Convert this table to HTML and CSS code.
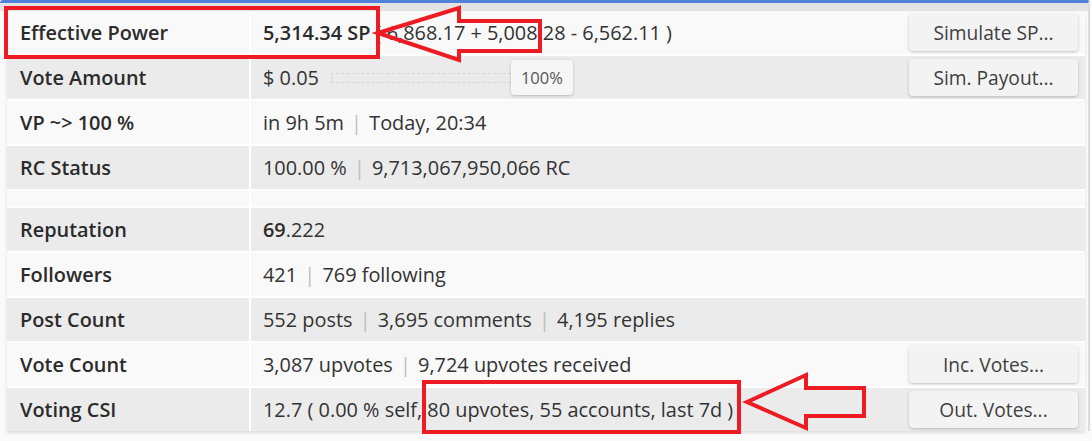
FILE: index.html
```html
<!DOCTYPE html>
<html>
<head>
<meta charset="utf-8">
<link rel="stylesheet" href="styles.css">
</head>
<body>
<div class="panel">
  <div class="list">
    <div class="row light">
      <div class="label">Effective Power</div>
      <div class="value"><span class="cell-text"><b>5,314.34 SP</b> ( 6,868.17 + 5,008.28 - 6,562.11 )</span><button class="btn">Simulate SP...</button></div>
    </div>
    <div class="row dark">
      <div class="label">Vote Amount</div>
      <div class="value"><span class="cell-text">$ 0.05</span><span class="slider"></span><span class="badge">100%</span><button class="btn">Sim. Payout...</button></div>
    </div>
    <div class="row light">
      <div class="label">VP ~&gt; 100 %</div>
      <div class="value"><span class="cell-text">in 9h 5m <span class="sep">|</span> Today, 20:34</span></div>
    </div>
    <div class="row dark">
      <div class="label">RC Status</div>
      <div class="value"><span class="cell-text">100.00 % <span class="sep">|</span> 9,713,067,950,066 RC</span></div>
    </div>
    <div class="row light spacer">
      <div class="label"></div>
      <div class="value"></div>
    </div>
    <div class="row dark">
      <div class="label">Reputation</div>
      <div class="value"><span class="cell-text"><b>69</b>.222</span></div>
    </div>
    <div class="row light">
      <div class="label">Followers</div>
      <div class="value"><span class="cell-text">421 <span class="sep">|</span> 769 following</span></div>
    </div>
    <div class="row dark">
      <div class="label">Post Count</div>
      <div class="value"><span class="cell-text">552 posts <span class="sep">|</span> 3,695 comments <span class="sep">|</span> 4,195 replies</span></div>
    </div>
    <div class="row light">
      <div class="label">Vote Count</div>
      <div class="value"><span class="cell-text">3,087 upvotes <span class="sep">|</span> 9,724 upvotes received</span><button class="btn">Inc. Votes...</button></div>
    </div>
    <div class="row dark">
      <div class="label">Voting CSI</div>
      <div class="value"><span class="cell-text">12.7 ( 0.00 % self, 80 upvotes, 55 accounts, last 7d )</span><button class="btn">Out. Votes...</button></div>
    </div>
  </div>
</div>
<svg class="marks" width="1092" height="441" viewBox="0 0 1092 441">
  <rect x="6" y="8" width="372" height="49" />
  <polygon points="378,33 459,8 459,21 540,21 540,51 459,51 459,60" />
  <rect x="424" y="382" width="315" height="50" />
  <polygon points="747,402 806,375 806,388 864,388 864,416 806,416 806,428" />
</svg>
</body>
</html>
```
FILE: styles.css
```css
html, body {
  margin: 0;
  padding: 0;
  background: #fafafa;
}
body {
  width: 1092px;
  height: 441px;
  overflow: hidden;
  position: relative;
  font-family: "Open Sans", "Liberation Sans", sans-serif;
  color: #333;
}
.panel {
  width: 1090px;
  border-top: 3px solid #4f82d8;
  border-right: 2px solid #dcdcdc;
  border-radius: 3px 3px 0 0;
  box-sizing: border-box;
  padding: 8px 5px 0 7px;
  background-color: #fafafa;
  background-image: linear-gradient(#e3e3e3, #e3e3e3);
  background-size: 100% 8px;
  background-repeat: no-repeat;
}
.list {
  width: 1078px;
  background: #fff;
  display: flex;
  flex-direction: column;
  gap: 2px;
  box-shadow: 0 2px 3px rgba(0, 0, 0, 0.12);
}
.row {
  display: grid;
  grid-template-columns: 242px 1fr;
  column-gap: 2px;
  height: 43px;
}
.row.spacer {
  height: 15px;
}
.row.light > div { background: #f9f9f9; }
.row.dark > div { background: #ebebeb; }
.label {
  display: flex;
  align-items: center;
  padding-left: 13px;
  font-size: 19.9px;
  font-weight: 600;
  color: #2b2b2b;
}
.value {
  display: flex;
  align-items: center;
  padding-left: 12px;
  padding-right: 7px;
  font-size: 19.9px;
  color: #333;
}
.value b {
  font-weight: 600;
  color: #2b2b2b;
}
.cell-text {
  white-space: pre;
}
.sep {
  color: #bdbdbd;
  margin: 0 2px;
}
.slider {
  width: 180px;
  height: 10px;
  margin-left: 12px;
  border: 1px dashed #d6d6d6;
  border-right: none;
  box-sizing: border-box;
}
.badge {
  display: inline-flex;
  align-items: center;
  justify-content: center;
  width: 62px;
  height: 35px;
  border-radius: 4px;
  background: #f6f6f6;
  box-shadow: 0 1px 3px rgba(0, 0, 0, 0.22);
  font-size: 16.5px;
  color: #555;
}
.btn {
  margin-left: auto;
  width: 169px;
  height: 37px;
  border: none;
  border-radius: 4px;
  background: #f3f3f3;
  box-shadow: 0 1px 3px rgba(0, 0, 0, 0.22);
  font-family: "Open Sans", "Liberation Sans", sans-serif;
  font-size: 19.2px;
  color: #3f3f3f;
  padding: 0;
}
.marks {
  position: absolute;
  top: 0;
  left: 0;
  pointer-events: none;
}
.marks rect, .marks polygon {
  fill: none;
  stroke: #ed1c24;
  stroke-width: 4;
}
```
